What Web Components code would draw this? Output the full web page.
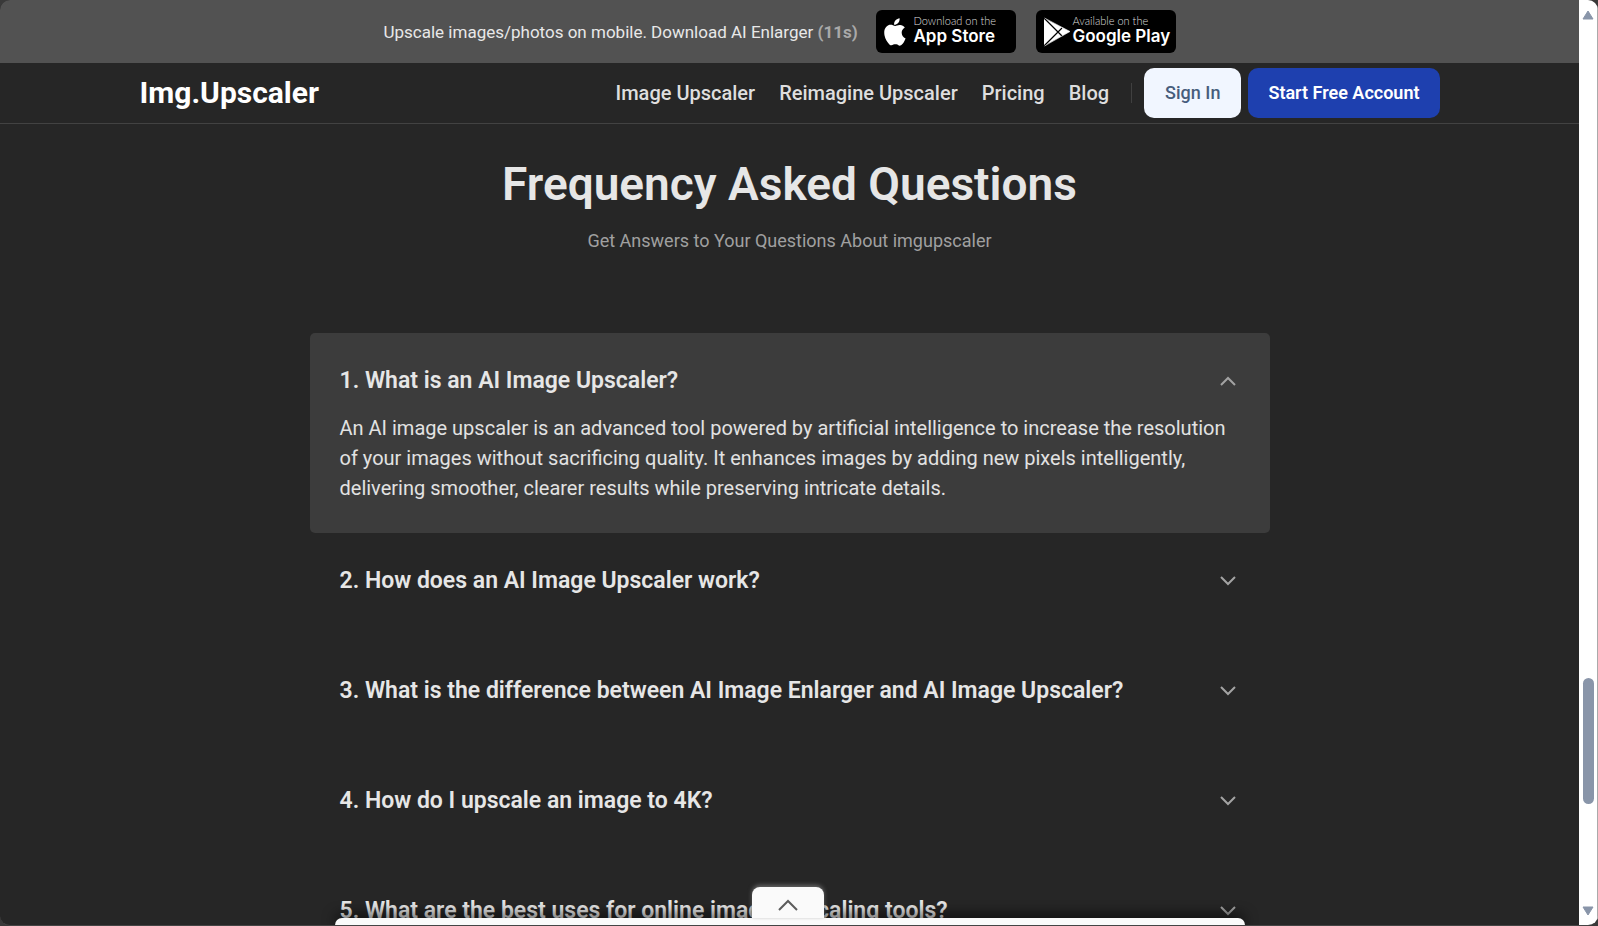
<!DOCTYPE html>
<html lang="en">
<head>
<meta charset="utf-8">
<meta name="viewport" content="width=device-width, initial-scale=1">
<title>Img.Upscaler – Frequency Asked Questions</title>
<style>
  html, body { margin: 0; height: 100%; background: #393939; }
  body { font-family: Roboto, "Liberation Sans", sans-serif; color: #e6e6e6; overflow: hidden; }
</style>
</head>
<body>
<app-window>
  <promo-bar>
    <store-badge store="apple" caption="Download on the" name="App Store"></store-badge>
    <store-badge store="google" caption="Available on the" name="Google Play"></store-badge>
  </promo-bar>
  <site-nav></site-nav>
  <faq-section>
    <faq-item question="1. What is an AI Image Upscaler?" open>An AI image upscaler is an advanced tool powered by artificial intelligence to increase the resolution of your images without sacrificing quality. It enhances images by adding new pixels intelligently, delivering smoother, clearer results while preserving intricate details.</faq-item>
    <faq-item question="2. How does an AI Image Upscaler work?"></faq-item>
    <faq-item question="3. What is the difference between AI Image Enlarger and AI Image Upscaler?"></faq-item>
    <faq-item question="4. How do I upscale an image to 4K?"></faq-item>
    <faq-item question="5. What are the best uses for online image upscaling tools?"></faq-item>
  </faq-section>
  <bottom-dock slot="dock"></bottom-dock>
  <scroll-rail slot="rail"></scroll-rail>
</app-window>
<script>
function define(name, render, setup) {
  customElements.define(name, class extends HTMLElement {
    connectedCallback() {
      if (this.shadowRoot) return;
      const t = document.createElement('template');
      t.innerHTML = '<style>:host,*{box-sizing:border-box}</style>' + render(this);
      this.attachShadow({ mode: 'open' }).append(t.content.cloneNode(true));
      if (setup) setup(this, this.shadowRoot);
    }
  });
}

define('app-window', () => `
  <style>
    :host { display: grid; grid-template-columns: minmax(0, 1fr) auto; height: 100vh; overflow: hidden;
      border-radius: 10px; border-bottom: 1px solid #444; background: #262626; }
    .page { position: relative; overflow: hidden; }
  </style>
  <div class="page"><slot></slot><slot name="dock"></slot></div>
  <slot name="rail"></slot>`);

define('promo-bar', () => `
  <style>
    :host { display: flex; align-items: center; justify-content: center; min-height: 63px; background: #525252; }
    p { margin: 0; min-width: 492px; font-size: 17px; line-height: 24px; color: #e8e8e8; }
    b { color: #a9a9a9; font-weight: 700; }
    .stores { display: flex; }
    ::slotted(store-badge) { margin-right: 20px; }
  </style>
  <p>Upscale images/photos on mobile. Download AI Enlarger <b>(11s)</b></p>
  <div class="stores"><slot></slot></div>`);

const storeIcons = {
  apple: `<svg width="24" height="28" viewBox="0 0 24 28" fill="#fff" aria-hidden="true"><path d="M16.6 0.3c.2 1.800-.4 3.400-1.500 4.700-1.100 1.200-2.600 1.900-4 1.800-.2-1.700.5-3.300 1.500-4.500C13.700 1.200 15.200.4 16.600.3zM12.300 7.900c.9 0 2.600-1.200 4.800-1 1.900.1 3.600.9 4.700 2.500-2.400 1.500-3.200 3.600-3.100 5.500.1 2.600 1.500 4.500 3.900 5.500-.9 2.500-2.400 5.100-4.200 6.500-1.600 1.200-2.800.9-4-.3-1.300-.6-2.700-.6-4 0-1.400.8-2.700 1-4-.2C4.200 24.300 2.300 21 1.600 17.800.9 14.300 1.100 11.200 3.100 9 5.300 6.600 8 6.500 9.900 7.300c.9.400 1.700.6 2.400.6z"/></svg>`,
  google: `<svg width="28" height="30" viewBox="0 0 28 30" aria-hidden="true"><path d="M1 1v28L27 14.500z" fill="#fff"/><path d="M1 1l18 18M1 29l18-18" stroke="#000" stroke-width="1.200" fill="none"/><path d="M1.500 1L27 14.500 1.500 29" fill="none" stroke="#fff" stroke-width=".6"/></svg>`
};
define('store-badge', el => `
  <style>
    :host { display: block; }
    a { display: flex; align-items: center; width: 140px; height: 43px; padding: 0 7px; border-radius: 6px; background: #000;
      color: #fff; text-decoration: none; font-family: Inter, sans-serif; }
    :host([store="apple"]) a { gap: 7px; }
    :host([store="google"]) a { gap: 2px; }
    span { display: flex; flex-direction: column; padding-bottom: 5px; white-space: nowrap; }
    small { font: 300 11px/13px Lato, sans-serif; color: #ddd; }
    strong { font-size: 17px; line-height: 18px; font-weight: 600; }
    svg { flex: none; }
  </style>
  <a href="#">${storeIcons[el.getAttribute('store')]}<span><small>${el.getAttribute('caption')}</small><strong>${el.getAttribute('name')}</strong></span></a>`);

define('site-nav', () => `
  <style>
    :host { display: block; border-bottom: 1px solid #424242; }
    header { display: flex; align-items: center; justify-content: space-between; max-width: 1300px; min-height: 60px; margin: 0 auto; }
    a { color: inherit; text-decoration: none; }
    .logo { font-size: 30px; line-height: 36px; font-weight: 700; color: #fff; }
    nav, .links, .actions { display: flex; align-items: center; }
    .links { gap: 24px; font-size: 20px; line-height: 30px; font-weight: 500; color: #dedede; }
    .actions { gap: 7px; }
    .rule { width: 1px; height: 20px; margin: 0 12px 0 22px; background: #404040; }
    button { height: 50px; border: 0; border-radius: 10px; padding: 0 20px; font: 600 18px/24px Roboto, sans-serif; color: #fff; background: #1e40af; cursor: pointer; white-space: nowrap; }
    button.in { padding: 0 21px; font-weight: 500; color: #475d7c; background: #f1f6ff; }
  </style>
  <header>
    <a class="logo" href="#">Img.Upscaler</a>
    <nav>
      <div class="links"><a href="#">Image Upscaler</a><a href="#">Reimagine Upscaler</a><a href="#">Pricing</a><a href="#">Blog</a></div>
      <span class="rule"></span>
      <div class="actions"><button class="in">Sign In</button><button>Start Free Account</button></div>
    </nav>
  </header>`);

define('faq-section', () => `
  <style>
    :host { display: block; max-width: 960px; margin: 0 auto; padding-top: 30px; }
    h1 { margin: 0; font-size: 46px; line-height: 60px; font-weight: 600; text-align: center; color: #e6e6e6; }
    p { margin: 12px 0 77px; font-size: 18px; line-height: 30px; text-align: center; color: #a0a0a0; }
  </style>
  <h1>Frequency Asked Questions</h1>
  <p>Get Answers to Your Questions About imgupscaler</p>
  <slot></slot>`);

define('faq-item', el => `
  <style>
    :host { display: block; padding: 30px; border-radius: 5px; }
    :host([open]) { background: #3c3c3c; }
    h2 { margin: 0 0 15px; font-size: 23px; }
    button { display: flex; align-items: center; justify-content: space-between; width: 100%; padding: 0; border: 0; background: none;
      font: 600 23px/35px Roboto, sans-serif; color: #e6e6e6; text-align: left; cursor: pointer; }
    svg { flex: none; }
    :host([open]) svg { transform: rotate(180deg); }
    .answer { display: none; font-size: 20px; line-height: 30px; color: #e2e2e2; }
    :host([open]) .answer { display: block; }
  </style>
  <h2><button aria-expanded="${el.hasAttribute('open')}"><span>${el.getAttribute('question')}</span>
    <svg width="24" height="24" viewBox="0 0 24 24" fill="none" stroke="#a3a3a3" stroke-width="2" aria-hidden="true"><path d="M5 8l7 7 7-7"/></svg></button></h2>
  <div class="answer"><slot></slot></div>`,
  (el, root) => root.querySelector('button').addEventListener('click', e => {
    e.currentTarget.setAttribute('aria-expanded', el.toggleAttribute('open'));
  }));

define('bottom-dock', () => `
  <style>
    :host { position: absolute; inset: auto 0 0; display: block; width: 910px; max-width: 100%; margin: 0 auto; }
    button { display: flex; align-items: center; justify-content: center; width: 72px; height: 31px; margin: 0 auto; padding: 5px 0 0; border: 0;
      border-radius: 8px 8px 0 0; background: #fafafa; box-shadow: 0 -2px 4px #666; position: relative; left: -2px; z-index: 1; }
    .bar { height: 7px; border-radius: 7px 7px 0 0; background: #fafafa; box-shadow: 0 -2px 14px #000; position: relative; }
  </style>
  <button aria-label="Expand panel"><svg width="24" height="20" viewBox="0 0 24 20" fill="none" stroke="#5c5c5c" stroke-width="2" aria-hidden="true"><path d="M3 15l9-9 9 9"/></svg></button>
  <div class="bar"></div>`);

define('scroll-rail', () => `
  <style>
    :host { display: flex; flex-direction: column; align-items: center; width: 19px; padding: 10px 0 9px; background: #fff; border-right: 1px solid #aaa; }
    svg { flex: none; }
    .before { flex: 659; }
    .thumb { flex: 126; width: 11px; border-radius: 6px; background: #8995a9; }
    .after { flex: 102; }
  </style>
  <svg width="12" height="10" viewBox="0 0 12 10" aria-hidden="true"><path d="M6 1l5 8H1z" fill="#8995a9" stroke="#8995a9" stroke-linejoin="round"/></svg>
  <div class="before"></div><div class="thumb"></div><div class="after"></div>
  <svg width="12" height="10" viewBox="0 0 12 10" aria-hidden="true"><path d="M1 1h10L6 9z" fill="#8995a9" stroke="#8995a9" stroke-linejoin="round"/></svg>`);
</script>
</body>
</html>
